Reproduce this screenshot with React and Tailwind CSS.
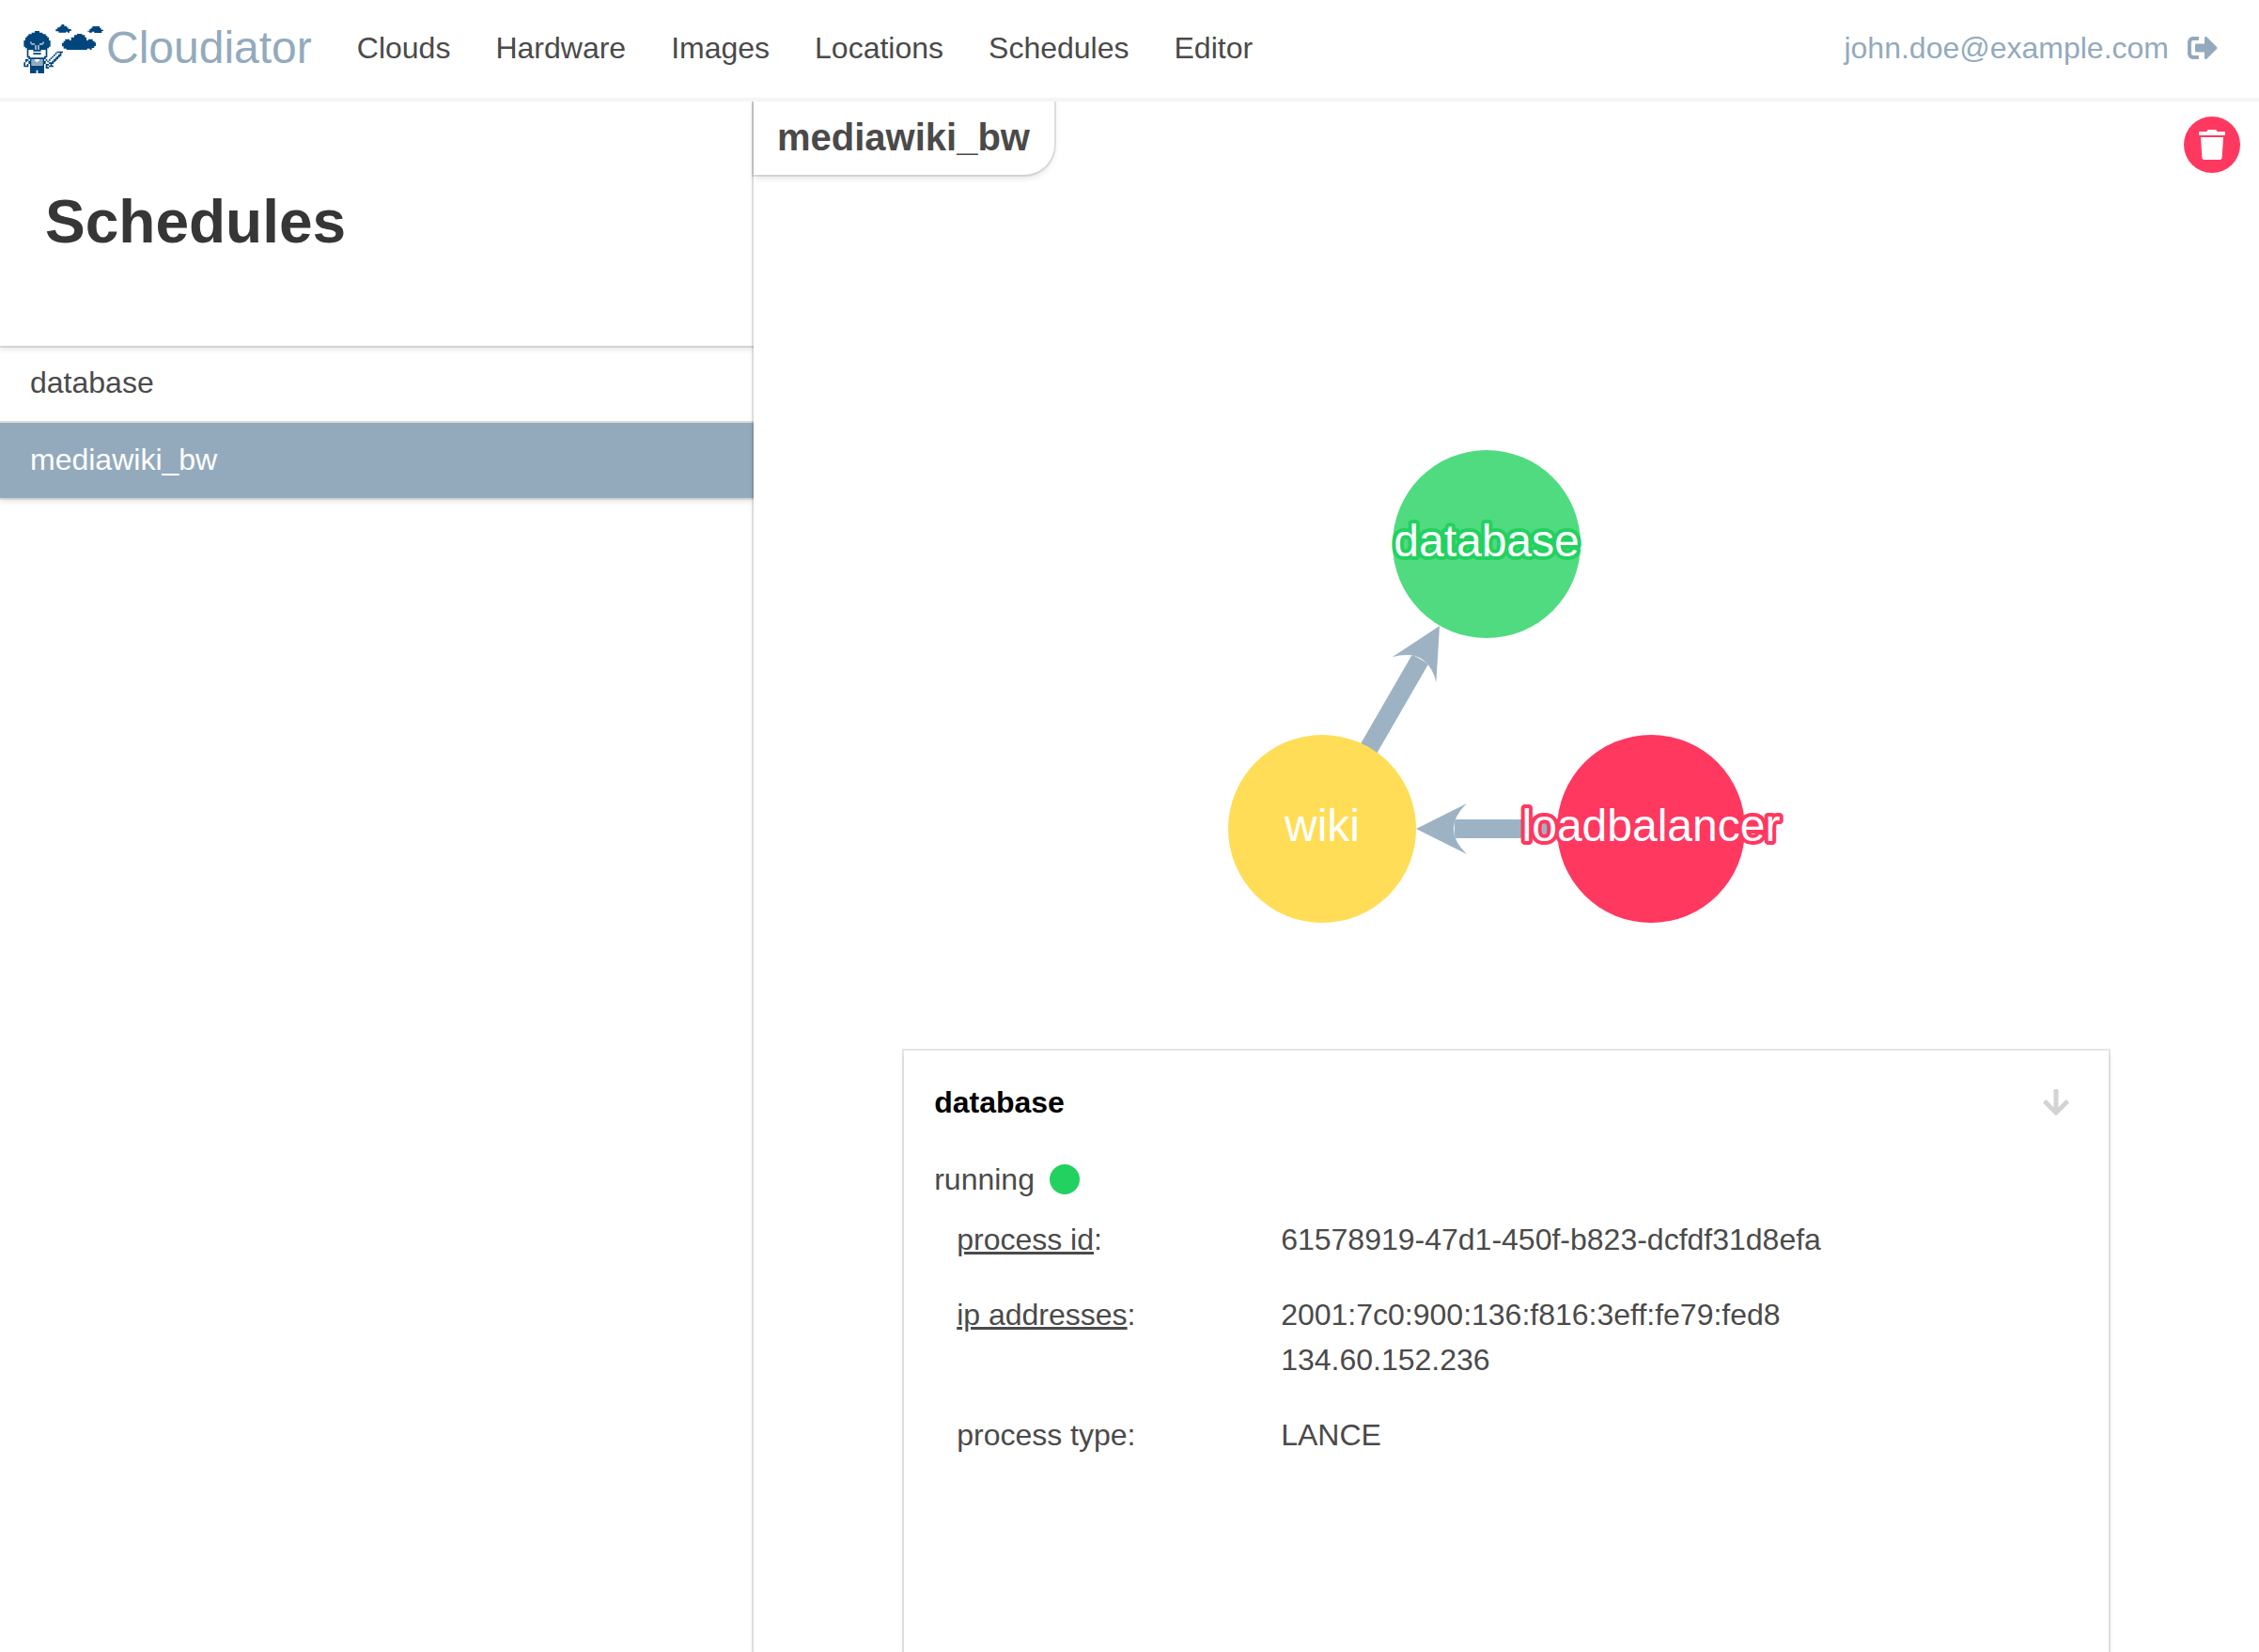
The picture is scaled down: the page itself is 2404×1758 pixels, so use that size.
import { FaArrowDown, FaSignOutAlt, FaTrash } from "react-icons/fa";

const NAV = ["Clouds", "Hardware", "Images", "Locations", "Schedules", "Editor"];

const SHADOW = "shadow-[0_4px_6px_rgba(10,10,10,0.1),0_0_0_2px_rgba(10,10,10,0.1)]";

// Pixel map of the gladiator: # dark blue, g light blue, w white
const GLADIATOR = [
  ".......###...............",
  ".....#######.............",
  "...###########...........",
  "..#############..........",
  ".###############.........",
  ".###############.........",
  "#################........",
  "####g#######g####........",
  "#####gg###gg#####........",
  "#######g#g#######........",
  ".######g#g######.........",
  "..#####g#g#####..........",
  "..#www#####www#..........",
  "..#wwwwwwwwwww#......####",
  "..#www#####www#.....#ww#.",
  "..#wwwwwwwwwww#....#ww##.",
  "..##wwwwwwwww##...#ww##..",
  "...###########...#ww##...",
  ".##.#ggwwwgg#.#.#ww##....",
  ".#w##gggwggg##w#ww##.....",
  "#ww##ggggggg##ww###......",
  "#w#.#ggggggg#.##w#.......",
  "###.#########.#w###......",
  "....#########.##.........",
  "....#########............",
  "....####.####............",
  "....####.####............",
];

// One path per colour keeps neighbouring pixels free of seams
const pixelPath = (color) =>
  GLADIATOR.flatMap((row, r) =>
    [...row].map((c, i) => (c === color ? `M${46 + i * 5} ${69 + r * 5}h5v5h-5z` : ""))
  ).join("");

function Logo() {
  return (
    <svg width="88" height="57" viewBox="42 39 264 171" fill="#00457c" aria-hidden="true">
      <path d="M148 63h5v-5h8v-5h5v-5h9v5h8v5h5v5h9v6h-5v5h-6v-3h-5v3h-24v-4h-9v-3z" />
      <path d="M250 68h6v-5h4v-4h5v-5h23v5h5v6h7v4h-5v6h-24v-4h-7v3h-9v-3h-5z" />
      <path d="M168 107h5v-6h5v-6h14v4h5v-10h10v-7h9v-4h16v4h9v7h5v10h6v-4h14v6h6v5h4v11h-5v6h-8v6h-6v-4h-9v4h-66v-4h-9v-7h-5z" />
      <path d={pixelPath("#")} />
      <path d={pixelPath("g")} fill="#93aabd" />
    </svg>
  );
}

function Arrow({ x, y, angle, length }) {
  return (
    <g transform={`translate(${x} ${y}) rotate(${angle})`} fill="#9db3c4">
      <rect x="41" y="-10" width={length - 41} height="20" />
      <path d="M0 0L54 -27Q26 0 54 27Z" />
      <path d="M54 -27Q26 0 54 27" fill="none" stroke="#fff" strokeOpacity="0.15" />
    </g>
  );
}

const NODES = [
  { name: "database", x: 379, y: 140, fill: "#50db80", edge: "#23d160" },
  { name: "wiki", x: 204, y: 443, fill: "#ffdd57", edge: "#ffdd57" },
  { name: "loadbalancer", x: 554, y: 443, fill: "#ff3860", edge: "#ff3860" },
];

function Graph() {
  return (
    <svg width="800" height="580" viewBox="0 0 800 580" role="img" aria-label="Process graph">
      <Arrow x={304} y={443} angle={0} length={151} />
      <Arrow x={329} y={227} angle={120} length={151} />
      {NODES.map((n) => (
        <circle key={n.name} cx={n.x} cy={n.y} r="100" fill={n.fill} />
      ))}
      {NODES.map((n) => (
        <text
          key={n.name}
          x={n.x}
          y={n.y + 13}
          textAnchor="middle"
          fontSize="48"
          fill="#fff"
          stroke={n.edge}
          strokeWidth="8"
          strokeLinejoin="round"
          paintOrder="stroke"
        >
          {n.name}
        </text>
      ))}
    </svg>
  );
}

function Row({ label, underlined, children }) {
  return (
    <tr className="align-top">
      <th scope="row" className="w-[345px] px-6 pb-8 text-left font-normal">
        <span className={underlined ? "underline" : ""}>{label}</span>:
      </th>
      <td className="px-6 pb-8">{children}</td>
    </tr>
  );
}

export default function App() {
  return (
    <div className="flex min-h-screen flex-col overflow-hidden bg-white font-['Liberation_Sans',Arial,sans-serif] text-[32px] leading-[48px] text-[#4a4a4a]">
      <header className="relative z-20 flex h-[104px] items-center bg-white pb-[2px] shadow-[0_4px_0_#f5f5f5]">
        <a href="#home" className="flex items-center gap-px px-6 text-5xl text-[#93aabd]">
          <Logo />
          <span>Cloudiator</span>
        </a>
        <nav className="flex">
          {NAV.map((item) => (
            <a key={item} href={`#${item.toLowerCase()}`} className="px-6">
              {item}
            </a>
          ))}
        </nav>
        <div className="ml-auto flex items-center gap-5 pr-11 text-[#93aabd]">
          <a href="#account">john.doe@example.com</a>
          <button type="button" aria-label="Sign out">
            <FaSignOutAlt size={32} />
          </button>
        </div>
      </header>

      <div className="flex flex-1">
        <aside className="w-[33.36%] shrink-0 overflow-x-clip">
          <div className={`relative z-10 flex h-[264px] items-center bg-white px-12 ${SHADOW}`}>
            <h1 className="text-[64px] leading-[72px] font-bold text-[#363636]">Schedules</h1>
          </div>
          <ul className={SHADOW}>
            <li className="border-b-2 border-[#dbdbdb]">
              <a href="#database" className="block px-8 pt-[15px] pb-[17px]">database</a>
            </li>
            <li>
              <a href="#mediawiki_bw" className="block bg-[#93aabd] px-8 pt-[15px] pb-[17px] text-white">mediawiki_bw</a>
            </li>
          </ul>
        </aside>

        <main className={`relative z-10 flex flex-1 flex-col ${SHADOW}`}>
          <div className="flex h-[335px] items-start justify-between">
            <h2 className={`rounded-br-[32px] bg-white pr-[26px] pl-[25px] pt-[18px] pb-4 text-[40px] leading-[48px] font-bold ${SHADOW}`}>
              mediawiki_bw
            </h2>
            <button
              type="button"
              aria-label="Delete schedule"
              className="mt-5 mr-5 flex size-[60px] items-center justify-center rounded-full bg-[#ff3860] text-white"
            >
              <FaTrash size={32} />
            </button>
          </div>
          <div className="flex justify-center">
            <Graph />
          </div>
          <section className={`mx-auto mt-[99px] w-4/5 flex-1 bg-white px-8 pt-[31px] ${SHADOW}`}>
            <div className="flex items-center justify-between">
              <h3 className="font-bold text-black">database</h3>
              <button type="button" aria-label="Collapse" className="mr-2 text-[#d3d3d3]">
                <FaArrowDown size={32} />
              </button>
            </div>
            <div className="mt-[34px] flex items-center gap-4">
              <span>running</span>
              <span className="size-8 rounded-full bg-[#23d160]" />
            </div>
            <table className="mt-4 w-full table-fixed">
              <tbody>
                <Row label="process id" underlined>61578919-47d1-450f-b823-dcfdf31d8efa</Row>
                <Row label="ip addresses" underlined>
                  2001:7c0:900:136:f816:3eff:fe79:fed8
                  <br />
                  134.60.152.236
                </Row>
                <Row label="process type">LANCE</Row>
              </tbody>
            </table>
          </section>
        </main>
      </div>
    </div>
  );
}
